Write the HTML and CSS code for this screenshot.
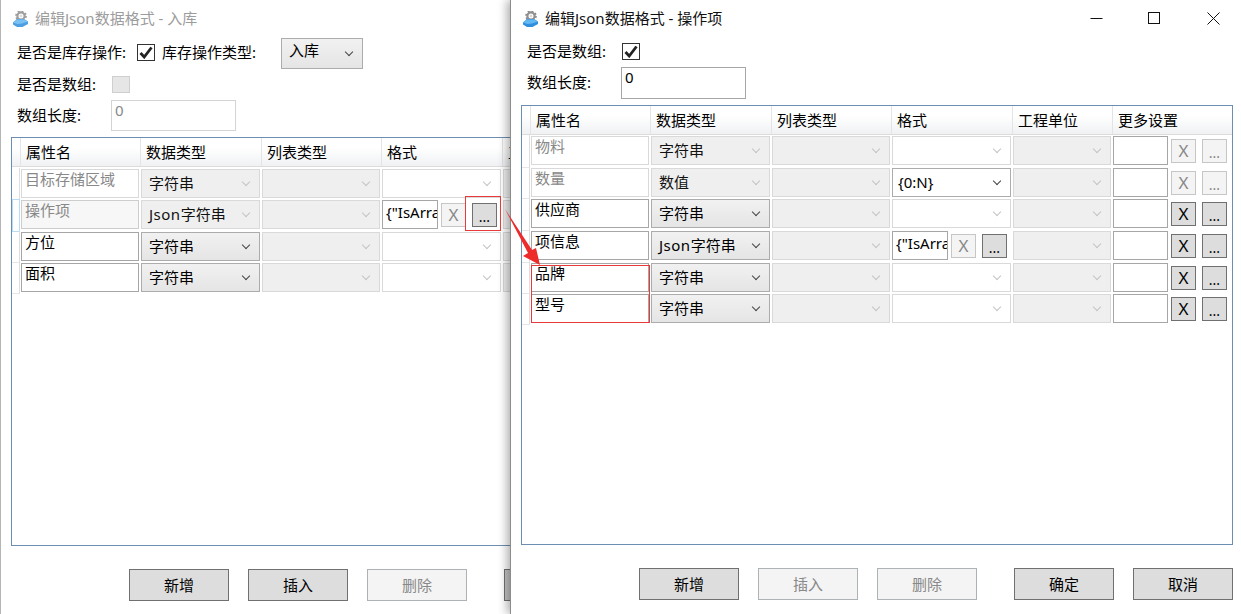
FILE: index.html
```html
<!DOCTYPE html>
<html lang="zh-CN">
<head>
<meta charset="utf-8">
<title>编辑Json数据格式</title>
<link rel="stylesheet" href="styles.css">
</head>
<body>
<svg class="defs" width="0" height="0" aria-hidden="true">
  <symbol id="app-icon" viewBox="0 0 15 16">
    <circle cx="8" cy="5" r="3.6" fill="none" stroke="#8f8f8f" stroke-width="2.2"/>
    <circle cx="8" cy="5" r="5" fill="none" stroke="#8a8a8a" stroke-width="1.6" stroke-dasharray="2 1.9"/>
    <circle cx="8" cy="5" r="1.4" fill="#d5d5d5"/>
    <path d="M0 11.5 L4 8 L11 8 L15 10.5 L15 13 L9.5 16 L4 16 L0 13.5 Z" fill="#2f8fdc"/>
    <path d="M0 11.5 L4 8.6 L11 8.6 L15 10.5 L9 12.6 L4.5 13 Z" fill="#63b7f2"/>
  </symbol>
  <symbol id="tick" viewBox="0 0 14 13">
    <path d="M1.5 7 L5.2 11 L12.5 1.5" fill="none" stroke="#222" stroke-width="2.8"/>
  </symbol>
</svg>
<main class="desktop">

  <section class="window window-back">
    <header class="titlebar">
      <svg class="app-icon"><use href="#app-icon"/></svg>
      <span class="title">编辑Json数据格式 - 入库</span>
    </header>
    <div class="form form-back">
      <div class="form-row row-tall">
        <span class="label label-stock">是否是库存操作:</span>
        <span class="check"><svg class="tick"><use href="#tick"/></svg></span>
        <span class="label label-type">库存操作类型:</span>
        <div class="sel sel-stock on"><span>入库</span></div>
      </div>
      <div class="form-row row-check">
        <span class="label label-field">是否是数组:</span>
        <span class="check check-off"></span>
      </div>
      <div class="form-row">
        <span class="label label-input">数组长度:</span>
        <div class="text length length-off">0</div>
      </div>
    </div>
    <div class="panel panel-back">
      <div class="cols head">
        <span></span><span>属性名</span><span>数据类型</span><span>列表类型</span><span>格式</span><span>工</span>
      </div>
      <div class="rows rows-back">
        <div class="cols row">
          <i class="rowhead"></i>
          <div class="text name off">目标存储区域</div>
          <div class="sel lock"><span>字符串</span></div>
          <div class="sel lock"></div>
          <div class="sel blank"></div>
          <div class="sel lock"></div>
        </div>
        <div class="cols row">
          <i class="rowhead rowhead-sel"></i>
          <div class="text name off selected">操作项</div>
          <div class="sel lock"><span><em class="latin">Json</em>字符串</span></div>
          <div class="sel lock"></div>
          <div class="more"><div class="text fmt">{"IsArra</div><b class="tool tool-off">X</b><b class="tool dots">...</b></div>
          <div class="sel lock"></div>
        </div>
        <div class="cols row">
          <i class="rowhead"></i>
          <div class="text name">方位</div>
          <div class="sel on"><span>字符串</span></div>
          <div class="sel lock"></div>
          <div class="sel blank"></div>
          <div class="sel lock"></div>
        </div>
        <div class="cols row">
          <i class="rowhead"></i>
          <div class="text name">面积</div>
          <div class="sel on"><span>字符串</span></div>
          <div class="sel lock"></div>
          <div class="sel blank"></div>
          <div class="sel lock"></div>
        </div>
      </div>
    </div>
    <footer class="footer footer-back">
      <button class="btn">新增</button>
      <button class="btn">插入</button>
      <button class="btn btn-off">删除</button>
      <button class="btn btn-ok btn-under"></button>
    </footer>
  </section>

  <section class="window window-front">
    <header class="titlebar title-on">
      <svg class="app-icon"><use href="#app-icon"/></svg>
      <span class="title">编辑Json数据格式 - 操作项</span>
      <div class="controls">
        <span class="control"><svg width="13" height="13" viewBox="0 0 13 13"><path d="M0.5 6.5H12.5" stroke="#111" fill="none"/></svg></span>
        <span class="control"><svg width="13" height="13" viewBox="0 0 13 13"><rect x="0.5" y="0.5" width="11" height="11" stroke="#111" fill="none"/></svg></span>
        <span class="control"><svg width="13" height="13" viewBox="0 0 13 13"><path d="M0.5 0.5L12.5 12.5M12.5 0.5L0.5 12.5" stroke="#111" fill="none"/></svg></span>
      </div>
    </header>
    <div class="form form-front">
      <div class="form-row row-check">
        <span class="label label-field">是否是数组:</span>
        <span class="check"><svg class="tick"><use href="#tick"/></svg></span>
      </div>
      <div class="form-row">
        <span class="label label-input">数组长度:</span>
        <div class="text length">0</div>
      </div>
    </div>
    <div class="panel">
      <div class="cols head">
        <span></span><span>属性名</span><span>数据类型</span><span>列表类型</span><span>格式</span><span>工程单位</span><span>更多设置</span>
      </div>
      <div class="rows rows-front">
        <div class="cols row">
          <i class="rowhead"></i>
          <div class="text name off">物料</div>
          <div class="sel lock"><span>字符串</span></div>
          <div class="sel lock"></div>
          <div class="sel blank"></div>
          <div class="sel lock"></div>
          <div class="more"><div class="text box"></div><b class="tool tool-off">X</b><b class="tool tool-off dots">...</b></div>
        </div>
        <div class="cols row">
          <i class="rowhead"></i>
          <div class="text name off">数量</div>
          <div class="sel lock"><span>数值</span></div>
          <div class="sel lock"></div>
          <div class="sel blank live"><span>{0:N}</span></div>
          <div class="sel lock"></div>
          <div class="more"><div class="text box"></div><b class="tool tool-off">X</b><b class="tool tool-off dots">...</b></div>
        </div>
        <div class="cols row">
          <i class="rowhead"></i>
          <div class="text name">供应商</div>
          <div class="sel on"><span>字符串</span></div>
          <div class="sel lock"></div>
          <div class="sel blank"></div>
          <div class="sel lock"></div>
          <div class="more"><div class="text box"></div><b class="tool">X</b><b class="tool dots">...</b></div>
        </div>
        <div class="cols row">
          <i class="rowhead"></i>
          <div class="text name">项信息</div>
          <div class="sel on"><span><em class="latin">Json</em>字符串</span></div>
          <div class="sel lock"></div>
          <div class="more"><div class="text fmt">{"IsArra</div><b class="tool tool-off">X</b><b class="tool dots">...</b></div>
          <div class="sel lock"></div>
          <div class="more"><div class="text box"></div><b class="tool">X</b><b class="tool dots">...</b></div>
        </div>
        <div class="cols row">
          <i class="rowhead"></i>
          <div class="text name">品牌</div>
          <div class="sel on"><span>字符串</span></div>
          <div class="sel lock"></div>
          <div class="sel blank"></div>
          <div class="sel lock"></div>
          <div class="more"><div class="text box"></div><b class="tool">X</b><b class="tool dots">...</b></div>
        </div>
        <div class="cols row">
          <i class="rowhead"></i>
          <div class="text name">型号</div>
          <div class="sel on"><span>字符串</span></div>
          <div class="sel lock"></div>
          <div class="sel blank"></div>
          <div class="sel lock"></div>
          <div class="more"><div class="text box"></div><b class="tool">X</b><b class="tool dots">...</b></div>
        </div>
      </div>
    </div>
    <footer class="footer footer-front">
      <button class="btn">新增</button>
      <button class="btn btn-off">插入</button>
      <button class="btn btn-off">删除</button>
      <button class="btn btn-ok">确定</button>
      <button class="btn">取消</button>
    </footer>
  </section>

  <div class="mark mark-button"></div>
  <div class="mark mark-names"></div>
  <svg class="arrow" width="50" height="70" viewBox="0 0 50 70">
    <path d="M1 1 L28 42 L32 40 L36 57 L19 48 L24 45 Z" fill="#ee2b2b"/>
  </svg>
</main>
</body>
</html>
```

FILE: styles.css
```css
* { box-sizing: border-box; }

html, body {
  margin: 0;
  padding: 0;
  background: #fff;
}

body {
  font-family: "Noto Sans", "Noto Sans CJK SC", sans-serif;
  font-size: 15px;
  line-height: 20px;
  color: #000;
}

.defs { position: absolute; }

.desktop {
  position: relative;
  width: 1241px;
  height: 614px;
  overflow: hidden;
  background: #fff;
}

/* windows on the desktop */
.window {
  position: absolute;
  top: 0;
  height: 614px;
  display: flex;
  flex-direction: column;
  background: #fff;
  border-left: 1px solid #8c8c8c;
}

.window-back {
  left: 0;
  width: 511px;
  overflow: hidden;
  border-left-color: #b5b5b5;
}

.window-front {
  left: 510px;
  width: 731px;
  box-shadow: -3px 0 9px rgba(0, 0, 0, .32);
}

/* title bar */
.titlebar {
  flex: none;
  height: 36px;
  display: flex;
  align-items: center;
  padding-left: 12px;
  color: #9c9c9c;
}

.title-on { color: #111; }

.app-icon {
  flex: none;
  width: 15px;
  height: 16px;
  margin: 1px 7px 0 0;
}

.window-back .app-icon { opacity: .85; }

.title { margin-top: -1px; white-space: nowrap; }

.controls {
  display: flex;
  margin-left: auto;
  margin-right: -1px;
}

.control {
  width: 58px;
  height: 36px;
  display: flex;
  align-items: center;
  justify-content: center;
}

.control:last-child { margin-left: 1px; }

/* form rows */
.form { flex: none; padding: 0 0 6px 16px; }

.form-row { display: flex; align-items: center; }
.row-tall { height: 33px; }
.row-check { height: 31px; }

.label { margin-top: -2px; white-space: nowrap; }
.label-stock { width: 120px; }
.label-type { width: 119px; margin-left: 7px; }
.label-field { width: 95px; }
.label-input { width: 94px; }

.check {
  width: 18px;
  height: 17px;
  display: flex;
  align-items: center;
  justify-content: center;
  border: 1px solid #333;
  background: #fff;
}

.check-off { border-color: #cfcfcf; background: #e6e6e6; }

.tick { width: 14px; height: 13px; }

.text {
  border: 1px solid #a6a6a6;
  background: #fff;
  overflow: hidden;
  white-space: nowrap;
  line-height: 18px;
}

.length {
  width: 125px;
  height: 32px;
  padding: 0 3px;
}

.length-off { height: 31px; border-color: #d4d4d4; color: #888; }

/* data grid */
.panel {
  flex: 1;
  min-height: 0;
  margin: 0 8px 0 10px;
  border: 1px solid #6c8eb1;
}

.panel-back { flex: 1 0 auto; width: 712px; }

.cols {
  display: grid;
  grid-template-columns: 8px 120px 121px 120px 121px 100px 1fr;
}

.head {
  height: 29px;
  background: linear-gradient(#fff 35%, #eff1f3);
  border-bottom: 1px solid #dcdcdc;
}

.head span {
  display: flex;
  align-items: center;
  padding-left: 5px;
  border-left: 1px solid #e4e4e4;
}

.head span:first-child { border-left: 0; padding: 0; }

.rows { display: grid; }
.rows-back { padding-top: 2px; grid-template-rows: 31px 32px 31px 31px; }
.rows-front { padding-top: 1px; grid-template-rows: 32px 31px 32px 32px 31px 31px; }

.rowhead {
  display: block;
  border-bottom: 1px solid #e6e6e6;
  border-right: 1px solid #dedede;
}

.rowhead-sel { border: 1px solid #b6dcf6; }

.row > * { margin: 0 1px; height: 29px; }
.row > .rowhead { margin: -1px 0 0; height: auto; }

.name { padding: 0 3px; }
.name.off { border-color: #d9d9d9; color: #888; }
.name.selected { background: #f7f7f7; border-color: #cdcdcd; }

/* combo boxes */
.sel {
  display: flex;
  align-items: center;
  justify-content: flex-end;
  padding: 0 10px 0 7px;
  border: 1px solid #d9d9d9;
  background: #fff;
}

.sel span { margin: -2px auto 0 0; white-space: nowrap; }

.latin { font-style: normal; letter-spacing: .5px; }

.sel::after {
  content: "";
  flex: none;
  width: 5px;
  height: 5px;
  margin: -3px 0 0;
  border-right: 1.3px solid #c4c4c4;
  border-bottom: 1.3px solid #c4c4c4;
  transform: rotate(45deg);
}

.lock { background: #efefef; }
.lock span { color: #111; }

.on {
  border-color: #acacac;
  background: linear-gradient(#f1f1f1, #e5e5e5);
}

.on::after, .live::after { border-color: #444; }

.live { border-color: #acacac; }
.live span { margin-left: -2px; }

.sel-stock {
  width: 82px;
  height: 31px;
  margin: 1px 0 0;
}

.sel-stock span { margin-top: -6px; }

/* inline tools */
.more {
  display: flex;
  align-items: flex-start;
}

.box { width: 55px; height: 29px; }
.fmt { width: 56px; height: 29px; padding: 2px 0 0 3px; }

.tool {
  flex: none;
  width: 25px;
  height: 24px;
  margin: 3px 0 0 3px;
  display: flex;
  align-items: center;
  justify-content: center;
  border: 1px solid #707070;
  background: #ddd;
  font-size: 17px;
  font-weight: 400;
  color: #000;
}

.tool.dots {
  margin-left: 6px;
  font-size: 14px;
  padding-top: 3px;
}

.tool-off {
  border-color: #c6c6c6;
  background: #f4f4f4;
  color: #888;
}

/* footer */
.footer {
  flex: none;
  display: flex;
  justify-content: flex-end;
  gap: 19px;
  padding: 23px 8px 0 0;
}

.footer-back {
  width: 731px;
  height: 68px;
  justify-content: flex-start;
  padding-left: 128px;
}

.footer-front { height: 69px; }

.btn {
  flex: none;
  width: 100px;
  height: 32px;
  padding: 0;
  border: 1px solid #707070;
  border-radius: 0;
  background: #ddd;
  font: inherit;
  color: #000;
}

.btn-off {
  border-color: #adb2b5;
  background: #f4f4f4;
  color: #888;
}

.btn-ok { margin-left: 18px; }
.btn-under { background: #c4c4c4; }

/* red annotations over both windows */
.mark {
  position: absolute;
  border: 1px solid #e83a3a;
}

.mark-button { left: 465px; top: 196px; width: 36px; height: 35px; }
.mark-names { left: 531px; top: 265px; width: 119px; height: 58px; }

.arrow { position: absolute; left: 504px; top: 208px; }
```
